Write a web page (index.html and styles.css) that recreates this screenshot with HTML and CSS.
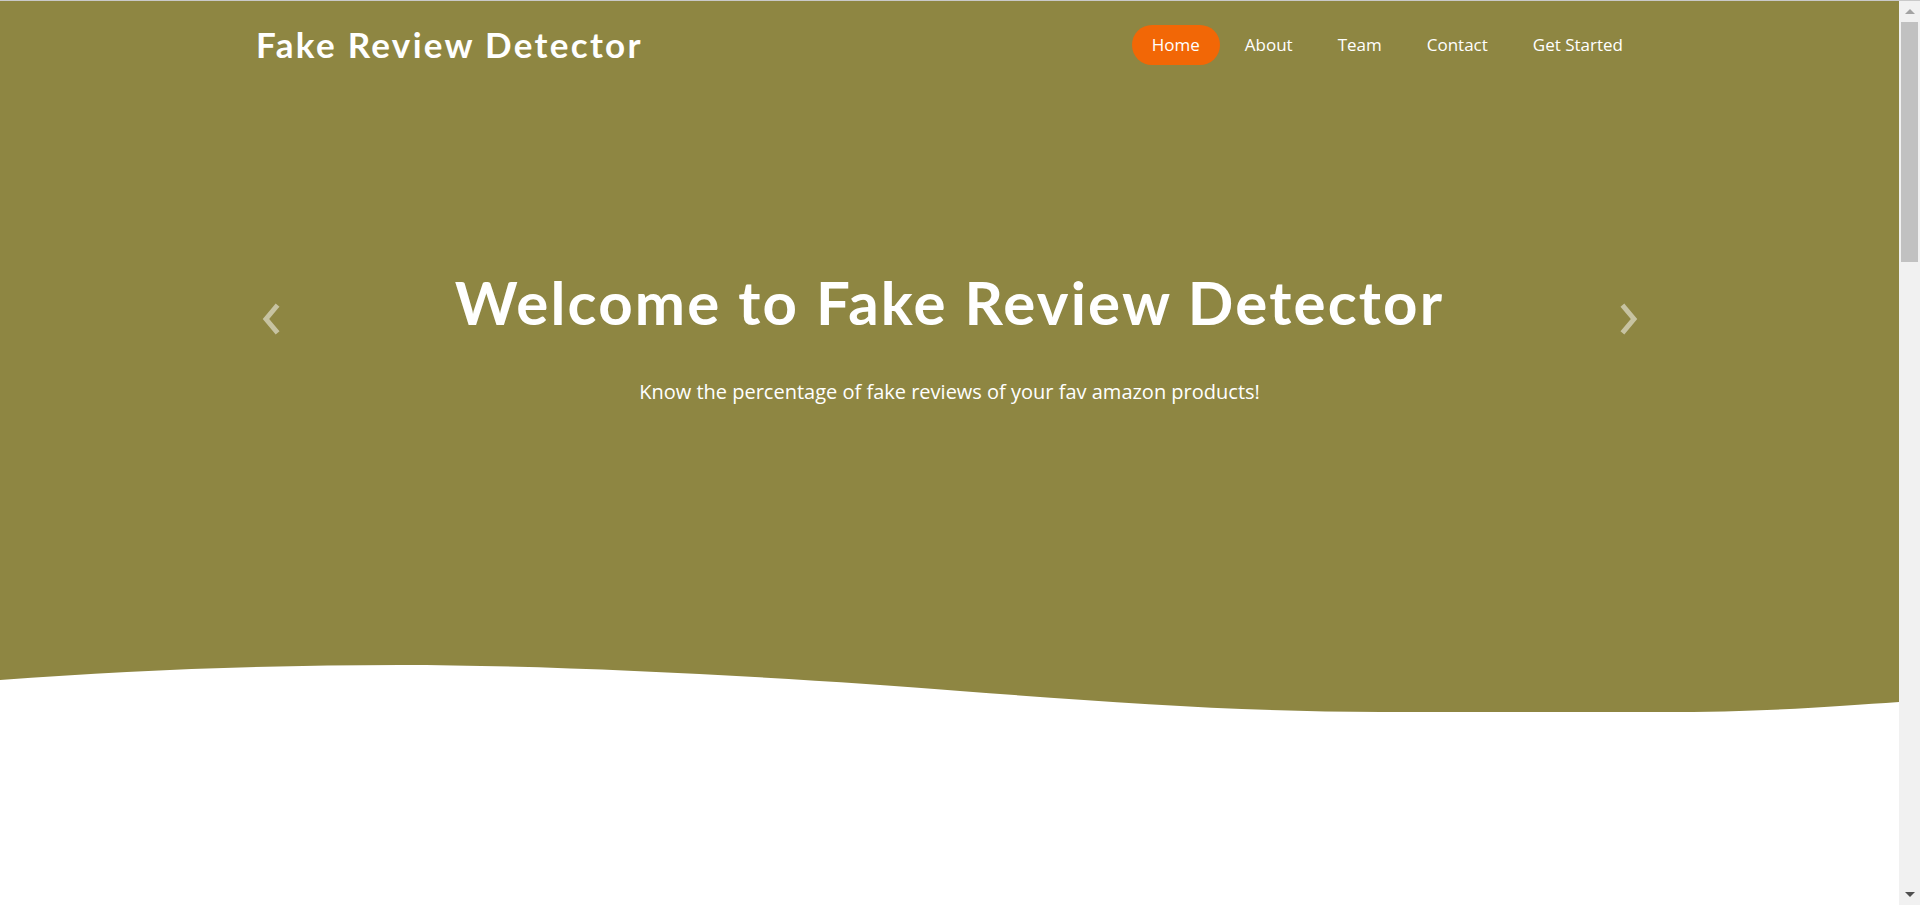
FILE: index.html
```html
<!DOCTYPE html>
<html lang="en">
<head>
<meta charset="utf-8">
<title>Fake Review Detector</title>
<link rel="stylesheet" href="styles.css">
</head>
<body>
<div class="page">
  <section class="hero">
    <header class="header">
      <div class="container header-inner">
        <h1 class="logo"><a href="#">Fake Review Detector</a></h1>
        <nav class="nav">
          <ul class="nav-menu">
            <li><a class="nav-link active" href="#">Home</a></li>
            <li><a class="nav-link" href="#">About</a></li>
            <li><a class="nav-link" href="#">Team</a></li>
            <li><a class="nav-link" href="#">Contact</a></li>
            <li><a class="nav-link" href="#">Get Started</a></li>
          </ul>
        </nav>
      </div>
    </header>
    <div class="container carousel">
      <a class="control" href="#" aria-label="Previous">
        <svg class="chevron" width="30" height="32" viewBox="0 0 30 32"><polyline points="20,4 10,16 20,28" fill="none" stroke="currentColor" stroke-width="5" stroke-linecap="square" stroke-linejoin="miter"/></svg>
      </a>
      <div class="slide">
        <h2 class="slide-title">Welcome to Fake Review Detector</h2>
        <p class="slide-text">Know the percentage of fake reviews of your fav amazon products!</p>
      </div>
      <a class="control control-next" href="#" aria-label="Next">
        <svg class="chevron" width="30" height="32" viewBox="0 0 30 32"><polyline points="11,4 21,16 11,28" fill="none" stroke="currentColor" stroke-width="5" stroke-linecap="square" stroke-linejoin="miter"/></svg>
      </a>
    </div>
    <svg class="hero-wave" viewBox="0 0 1899 56" preserveAspectRatio="none">
      <path d="M0 20 C130 10 270 5 400 5 C560 5 800 18 960 31 C1120 43 1250 52 1380 52 L1660 52 C1770 52 1840 46 1899 42 L1899 56 L0 56 Z" fill="#ffffff"/>
    </svg>
  </section>
  <main class="main"></main>
</div>
<div class="scrollbar" aria-hidden="true">
  <div class="sb-button"><span class="sb-arrow-up"></span></div>
  <div class="sb-track"><div class="sb-thumb"></div></div>
  <div class="sb-button"><span class="sb-arrow-down"></span></div>
</div>
</body>
</html>
```

FILE: styles.css
```css
html {
  background: #ffffff;
}

body {
  margin: 0;
  display: flex;
  align-items: flex-start;
  border-top: 1px solid #c9c9c9;
  font-family: "Open Sans", "Noto Sans", sans-serif;
  color: #ffffff;
}

a {
  color: inherit;
  text-decoration: none;
}

.page {
  flex: 1;
  min-width: 0;
}

.container {
  box-sizing: border-box;
  width: 1425px;
  margin: 0 auto;
  padding: 0 19px;
}

.hero {
  box-sizing: border-box;
  height: 715px;
  background: #8e8642;
  display: flex;
  flex-direction: column;
}

.header {
  height: 87px;
  flex: none;
}

.header-inner {
  height: 100%;
  display: flex;
  align-items: center;
  justify-content: space-between;
}

.logo {
  margin: 0;
  font-family: "Lato", "Open Sans", sans-serif;
  font-weight: 700;
  font-size: 35px;
  line-height: 1;
  letter-spacing: 2.3px;
}

.nav-menu {
  list-style: none;
  margin: 0;
  padding: 0;
  display: flex;
  gap: 5px;
}

.nav-link {
  display: block;
  padding: 8px 20px;
  font-size: 17px;
  line-height: 24px;
  border-radius: 50px;
  color: #ffffff;
}

.nav-link.active {
  background: #f26706;
}

.carousel {
  flex: 1;
  display: flex;
  align-items: flex-start;
  padding-top: 178px;
}

.control {
  flex: none;
  width: 30px;
  height: 106px;
  display: flex;
  align-items: center;
  color: rgba(255, 255, 255, 0.5);
}

.control-next {
  justify-content: flex-end;
}

.chevron {
  display: block;
}

.slide {
  flex: 1;
  text-align: center;
}

.slide-title {
  margin: 0;
  font-family: "Lato", "Open Sans", sans-serif;
  font-weight: 700;
  font-size: 60px;
  line-height: 72px;
  letter-spacing: 2.2px;
}

.slide-text {
  margin: 39px 0 0;
  font-size: 20px;
  line-height: 30px;
}

.hero-wave {
  display: block;
  flex: none;
  width: 100%;
  height: 56px;
}

.main {
  height: 2538px;
  background: #ffffff;
}

.scrollbar {
  position: sticky;
  top: 0;
  flex: none;
  width: 21px;
  height: calc(100vh - 1px);
  display: flex;
  flex-direction: column;
  background: #f1f1f1;
}

.sb-button {
  flex: none;
  height: 21px;
  display: flex;
  align-items: center;
  justify-content: center;
}

.sb-arrow-up {
  width: 0;
  height: 0;
  border-left: 5px solid transparent;
  border-right: 5px solid transparent;
  border-bottom: 5px solid #a3a3a3;
}

.sb-arrow-down {
  width: 0;
  height: 0;
  border-left: 5px solid transparent;
  border-right: 5px solid transparent;
  border-top: 5px solid #505050;
}

.sb-track {
  flex: 1;
  padding: 0 2px;
}

.sb-thumb {
  height: 240px;
  background: #c1c1c1;
}
```
